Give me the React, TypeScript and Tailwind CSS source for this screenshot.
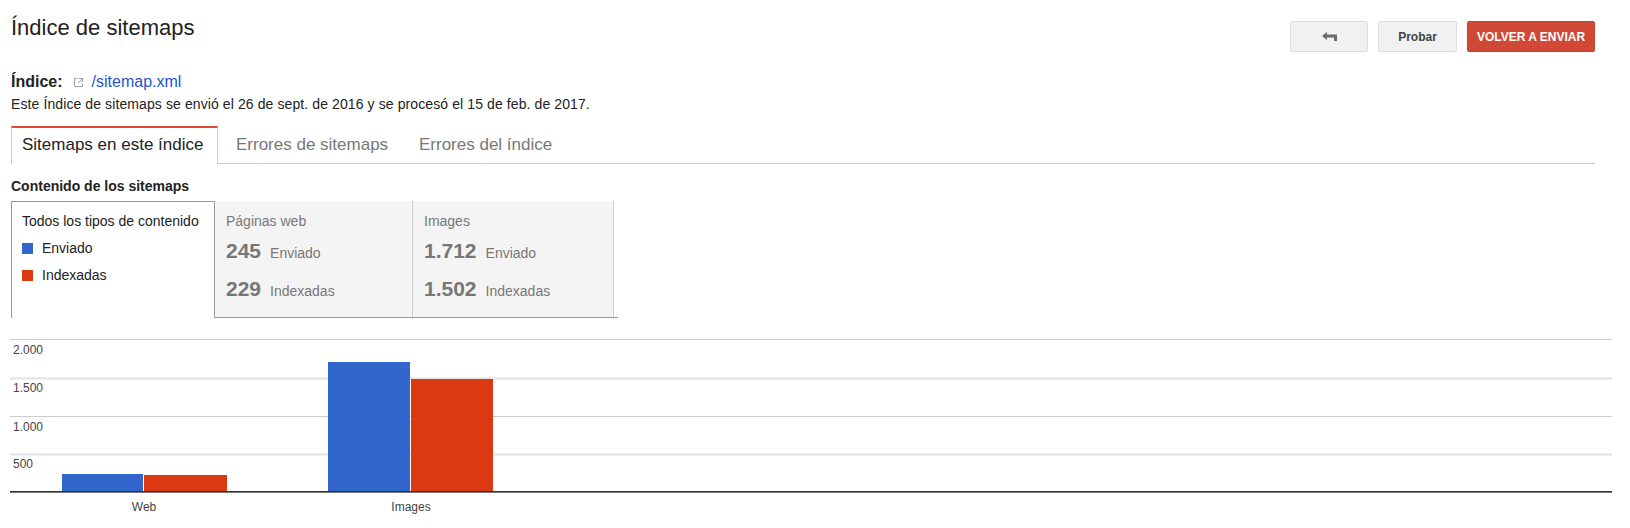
import React from 'react';

const stats = [
  { title: 'Páginas web', sent: '245', indexed: '229', width: 'w-[198px]' },
  { title: 'Images', sent: '1.712', indexed: '1.502', width: 'w-[201px]' },
];

const gridLines = [
  { y: 9, label: '2.000', color: '#cccccc', h: 1 },
  { y: 47.5, label: '1.500', color: '#e2e2e2', h: 2 },
  { y: 86, label: '1.000', color: '#cccccc', h: 1 },
  { y: 123.5, label: '500', color: '#e2e2e2', h: 2 },
];

const bars = [
  { label: 'Web', center: 144, blue: { x: 62, w: 81, y: 144 }, red: { x: 144, w: 83, y: 145 } },
  { label: 'Images', center: 411, blue: { x: 328, w: 82, y: 32 }, red: { x: 411, w: 82, y: 49 } },
];

const BackIcon = () => (
  <svg width="15" height="9" viewBox="0 0 15 9">
    <path d="M0 4 L5 0 L5 2.5 L15 2.5 L15 9 L12 9 L12 5.5 L5 5.5 L5 8 Z" fill="#6b6b6b" />
  </svg>
);

const ExternalIcon = () => (
  <svg width="9" height="9" viewBox="0 0 9 9" fill="none" stroke="#a0a0a0" strokeWidth="1">
    <path d="M3.5 0.5H0.5V8.5H8.5V5.5" />
    <path d="M5 0.5H8.5V4" />
    <path d="M8.5 0.5L4 5" />
  </svg>
);

const App = () => {
  return (
    <div className="min-h-[528px] w-full bg-white font-['Liberation_Sans',Arial,sans-serif] text-[#222]">
      <div className="pl-[11px] pr-[35px]">
        {/* Header */}
        <div className="flex items-start justify-between">
          <h1 className="mt-[15px] text-[22px] leading-[26px] font-normal text-[#222]">Índice de sitemaps</h1>
          <div className="mt-[21px] flex gap-[10px]">
            <button className="flex h-[31px] w-[78px] items-center justify-center rounded-[2px] border border-[#dcdcdc] bg-[#f1f1f1]">
              <BackIcon />
            </button>
            <button className="h-[31px] w-[79px] rounded-[2px] border border-[#dcdcdc] bg-[#f1f1f1] text-[12px] font-bold text-[#444]">
              Probar
            </button>
            <button className="h-[31px] w-[128px] rounded-[2px] border border-[#c9412f] bg-[#d14836] text-[12px] font-bold text-white">
              VOLVER A ENVIAR
            </button>
          </div>
        </div>

        {/* Index info */}
        <div className="mt-[20px] flex items-center text-[16px] leading-[20px]">
          <span className="font-bold text-[#222]">Índice:</span>
          <span className="ml-[11px] flex items-center">
            <ExternalIcon />
          </span>
          <a className="ml-[9px] text-[#2255cc]">/sitemap.xml</a>
        </div>
        <p className="mt-[4px] text-[14px] leading-[16px] tracking-[0.1px] text-[#222]">
          Este Índice de sitemaps se envió el 26 de sept. de 2016 y se procesó el 15 de feb. de 2017.
        </p>

        {/* Tabs */}
        <div className="mt-[14px] flex border-b border-[#cccccc]">
          <div className="-mb-px w-[207px] border-x border-t-2 border-x-[#cccccc] border-t-[#dd4b39] bg-white pl-[10px] pt-[7px] pb-[9px] text-[17px] leading-[20px] text-[#222]">
            Sitemaps en este índice
          </div>
          <div className="w-[188px] pl-[18px] pt-[9px] pb-[8px] text-[17px] leading-[20px] text-[#777]">
            Errores de sitemaps
          </div>
          <div className="pl-[13px] pr-[13px] pt-[9px] pb-[8px] text-[17px] leading-[20px] text-[#777]">
            Errores del índice
          </div>
        </div>

        <h2 className="mt-[14px] text-[14px] leading-[16px] font-bold text-[#222]">Contenido de los sitemaps</h2>

        {/* Content type boxes */}
        <div className="mt-[7px] flex">
          <div className="h-[117px] w-[204px] border-x border-t border-[#999] bg-white pl-[10px] pt-[10px] text-[14px] leading-[18px]">
            <div>Todos los tipos de contenido</div>
            <div className="mt-[9px] flex items-center gap-[9px]">
              <span className="h-[11px] w-[11px] bg-[#3366cc]" />
              <span>Enviado</span>
            </div>
            <div className="mt-[9px] flex items-center gap-[9px]">
              <span className="h-[11px] w-[11px] bg-[#dc3912]" />
              <span>Indexadas</span>
            </div>
          </div>
          <div className="flex h-[117px] border-b border-[#999]">
            {stats.map((s) => (
              <div key={s.title} className={`${s.width} border-r border-[#cccccc] bg-[#f4f4f4] pl-[11px] pt-[11px] text-[#777]`}>
                <div className="text-[14px] leading-[18px]">{s.title}</div>
                <div className="mt-[9px] flex items-baseline">
                  <span className="text-[21px] leading-[24px] font-bold">{s.sent}</span>
                  <span className="ml-[9px] text-[14px]">Enviado</span>
                </div>
                <div className="mt-[13px] flex items-baseline">
                  <span className="text-[21px] leading-[24px] font-bold">{s.indexed}</span>
                  <span className="ml-[9px] text-[14px]">Indexadas</span>
                </div>
              </div>
            ))}
            <div className="w-[4px]" />
          </div>
        </div>
      </div>

      {/* Chart */}
      <svg className="mt-[12px] block" width="1630" height="198" viewBox="0 0 1630 198">
        {gridLines.map((g) => (
          <g key={g.label}>
            <rect x="10" y={g.y} width="1602" height={g.h} fill={g.color} />
            <text x="13" y={g.y + 14.5} fontSize="12" fill="#444">
              {g.label}
            </text>
          </g>
        ))}
        {bars.map((b) => (
          <g key={b.label}>
            <rect x={b.blue.x} y={b.blue.y} width={b.blue.w} height={161 - b.blue.y} fill="#3366cc" />
            <rect x={b.red.x} y={b.red.y} width={b.red.w} height={161 - b.red.y} fill="#dc3912" />
            <text x={b.center} y="181" fontSize="12" fill="#444" textAnchor="middle">
              {b.label}
            </text>
          </g>
        ))}
        <rect x="10" y="161" width="1602" height="1" fill="#333" />
        <rect x="10" y="162" width="1602" height="1" fill="#777" />
      </svg>
    </div>
  );
};

export default App;
